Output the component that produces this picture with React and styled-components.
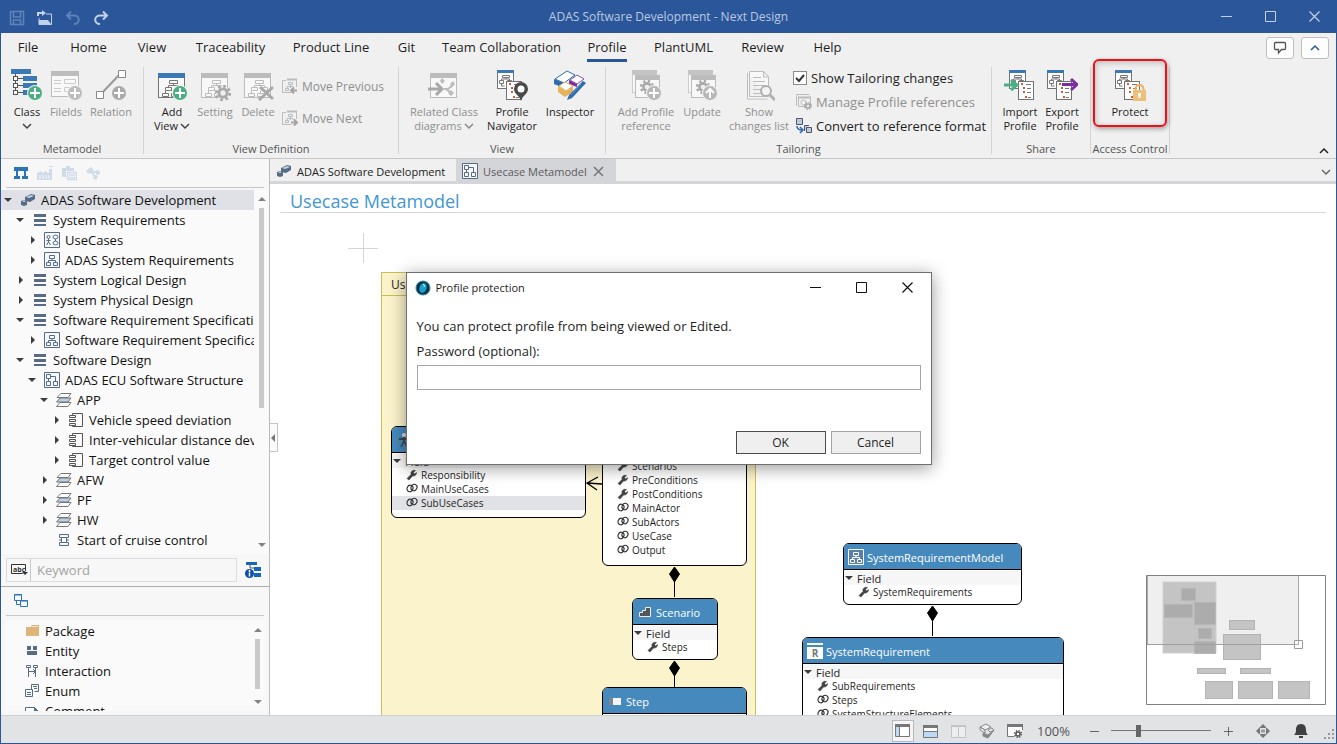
import styled, { createGlobalStyle } from "styled-components";

const colors = {
    title: "#2b579a",
    ribbon: "#f0f0f0",
    line: "#c6c6c9",
    text: "#1e1e1e",
    muted: "#8f8f8f",
    icon: "#737373",
    iconOff: "#bcbcbc",
    blue: "#3b78b6",
    slate: "#566b85",
    node: "#468abd",
    green: "#4bae84",
    purple: "#7c2fa3",
    red: "#d9573d",
    amber: "#e8b25c",
};

const GlobalStyle = createGlobalStyle`
    * { box-sizing: border-box; }
    body { margin: 0; background: #fff; }
    body, button, input {
        font-family: "Open Sans", "Noto Sans", sans-serif;
        font-size: 13px;
        color: ${colors.text};
    }
    button { background: none; border: none; padding: 0; }
    svg { display: block; flex: none; }
`;

const Window = styled.div`
    position: relative;
    display: flex;
    flex-direction: column;
    height: 100vh;
    border: solid ${colors.title};
    border-width: 0 1px 1px 1px;
    overflow: hidden;
`;

const TitleBar = styled.header`
    display: grid;
    grid-template-columns: 1fr auto 1fr;
    align-items: center;
    height: 33px;
    flex: none;
    background: ${colors.title};
    color: #b9c9e2;
    font-size: 12px;
`;

const QuickAccess = styled.div`
    display: flex;
    gap: 12px;
    padding: 2px 0 0 8px;
`;

const WindowButtons = styled.div`
    display: flex;
    justify-content: flex-end;

    button {
        display: flex;
        justify-content: center;
        width: 44px;
    }
`;

const MenuBar = styled.nav`
    display: flex;
    height: 34px;
    flex: none;
    background: ${colors.ribbon};
`;

const MenuTab = styled.button`
    display: flex;
    justify-content: center;
    width: ${(p) => p.$w}px;
    flex: none;
    height: 29px;
    white-space: nowrap;

    span {
        line-height: 28px;
        padding-bottom: 1px;
        height: 29px;
        border-bottom: ${(p) => (p.$active ? `3px solid ${colors.title}` : "none")};
    }
`;

const MenuTools = styled.div`
    display: flex;
    align-items: flex-start;
    gap: 7px;
    margin-left: auto;
    padding: 4px 7px 0 0;

    button {
        display: flex;
        align-items: center;
        justify-content: center;
        width: 28px;
        height: 22px;
        background: #fdfdfd;
        border: 1px solid #bdbdc2;
        border-radius: 3px;
    }
`;

const Ribbon = styled.div`
    display: flex;
    height: 92px;
    flex: none;
    background: ${colors.ribbon};
    border-bottom: 1px solid ${colors.line};
`;

const Group = styled.section`
    display: flex;
    flex-direction: column;
    width: ${(p) => p.$w}px;
    height: 87px;
    flex: none;
    border-right: 1px solid #d4d4d6;
`;

const GroupBody = styled.div`
    display: flex;
    flex: 1;
    padding-left: ${(p) => p.$pad}px;
`;

const GroupLabel = styled.div`
    height: 12px;
    line-height: 14px;
    text-align: center;
    white-space: nowrap;
    font-size: 11px;
    color: #555;
`;

const Tool = styled.button`
    position: relative;
    display: flex;
    flex-direction: column;
    align-items: center;
    gap: 4px;
    width: ${(p) => p.$w}px;
    flex: none;
    padding-top: 2px;
    font-size: 11px;
    line-height: 14px;
    white-space: nowrap;
    color: ${(p) => (p.disabled ? colors.muted : colors.text)};
`;

const ToolText = styled.span`
    display: flex;
    align-items: center;
    justify-content: center;
    gap: 2px;
    height: 14px;
`;

const Callout = styled.span`
    position: absolute;
    inset: -8px -1px 15px -1px;
    border: 2px solid #f00f14;
    border-radius: 6px;
    box-shadow: 1px 2px 5px #0005, inset 1px 2px 6px #0003;
`;

const ToolList = styled.div`
    display: flex;
    flex-direction: column;
    gap: ${(p) => p.$gap}px;
    padding-top: ${(p) => p.$top}px;
`;

const SmallTool = styled.button`
    display: flex;
    align-items: center;
    gap: 4px;
    height: 16px;
    padding-left: ${(p) => p.$indent || 0}px;
    font-size: ${(p) => p.$size || 13}px;
    white-space: nowrap;
    color: ${(p) => (p.disabled ? colors.muted : colors.text)};
`;

const CheckLabel = styled.label`
    display: flex;
    align-items: center;
    gap: 4px;
    height: 16px;
    padding-left: 1px;
    white-space: nowrap;

    input {
        appearance: none;
        width: 14px;
        height: 14px;
        margin: 0;
        border: 1px solid #8a8a8a;
        background: #fff url("data:image/svg+xml,%3Csvg xmlns='http://www.w3.org/2000/svg' viewBox='0 0 12 12'%3E%3Cpath d='M2 6l3 3 5-6' fill='none' stroke='%23333' stroke-width='2'/%3E%3C/svg%3E");
    }
`;

const RibbonEnd = styled.button`
    margin: auto 7px 3px auto;
`;

const Main = styled.main`
    display: flex;
    flex: 1;
    min-height: 0;
`;

const Sidebar = styled.aside`
    display: flex;
    flex-direction: column;
    width: 269px;
    flex: none;
    background: #f7f7f7;
    border-right: 1px solid #b9bbbe;
`;

const PanelBar = styled.div`
    display: flex;
    align-items: center;
    gap: 8px;
    height: 29px;
    flex: none;
    margin: 0 5px;
    padding-left: 7px;
    border-bottom: 1px solid ${colors.line};
`;

const ScrollArea = styled.div`
    display: flex;
    min-height: 0;
    background: #fafafa;
    ${(p) => (p.$grow ? "flex: 1; margin-top: 2px;" : "height: 90px; margin: 5px 4px 4px 5px;")}
`;

const Rows = styled.ul`
    flex: 1;
    min-width: 0;
    margin: 0;
    padding: 0;
    list-style: none;
    overflow: hidden;
`;

const TreeRow = styled.li`
    display: flex;
    align-items: center;
    height: 20px;
    gap: 5px;
    padding-left: ${(p) => p.$level * 12}px;
    white-space: nowrap;
    color: #111;
    background: ${(p) => (p.$selected ? "#e0e1e6" : "transparent")};
`;

const Toggle = styled.span`
    display: flex;
    justify-content: center;
    width: 14px;
    flex: none;
`;

const ToolboxRow = styled.li`
    display: flex;
    align-items: center;
    gap: 4px;
    height: 20px;
    padding-left: 19px;
    color: #111;
`;

const Scrollbar = styled.div`
    display: flex;
    flex-direction: column;
    align-items: center;
    width: 15px;
    padding: 5px 0 5px;
    gap: 5px;

    i {
        width: 5px;
        height: ${(p) => p.$thumb}px;
        background: #c9c9c9;
    }
    svg:last-child { margin-top: auto; }
`;

const SearchRow = styled.div`
    display: flex;
    align-items: center;
    gap: 8px;
    height: 33px;
    flex: none;
    padding: 0 5px;
    border-bottom: 1px solid #adadb0;
`;

const SearchBox = styled.div`
    display: flex;
    align-items: center;
    width: 231px;
    height: 24px;
    padding-left: 4px;
    border: 1px solid #dcdce0;

    input {
        width: 190px;
        height: 22px;
        margin-left: 2px;
        padding: 0 6px;
        border: none;
        border-left: 1px solid #c8ccd2;
        background: none;
        outline: none;
    }
    input::placeholder { color: #a3a3a3; opacity: 1; }
`;

const Editor = styled.section`
    display: flex;
    flex-direction: column;
    flex: 1;
    min-width: 0;
`;

const DocTabs = styled.div`
    display: flex;
    height: 25px;
    flex: none;
    background: ${colors.ribbon};
    border-bottom: 3px solid #d4d5d9;
`;

const DocTab = styled.button`
    display: flex;
    align-items: center;
    gap: 5px;
    width: ${(p) => p.$w}px;
    padding: 2px 0 0 6px;
    font-size: 11px;
    white-space: nowrap;
    color: ${(p) => (p.$active ? "#5b5b5f" : "#222")};
    background: ${(p) => (p.$active ? "#d4d5d9" : "transparent")};

    svg:nth-of-type(2) { margin: 0 12px 0 auto; }
`;

const TabsMenu = styled.button`
    margin: 4px 5px 0 auto;
`;

const Canvas = styled.div`
    position: relative;
    flex: 1;
    overflow: hidden;
    background: #fff;
`;

const PageTitle = styled.h1`
    margin: 0 10px;
    padding-left: 10px;
    height: 29px;
    line-height: 34px;
    border-bottom: 1px solid #d9d9dc;
    font-size: 18px;
    font-weight: 400;
    color: #3f97d3;
`;

const Package = styled.div`
    position: absolute;
    left: 111px;
    top: 88px;
    width: 375px;
    bottom: -20px;

    header {
        width: 110px;
        height: 23px;
        padding: 3px 9px;
        font-size: 12px;
        background: #fbf3cb;
        border: 1px solid #cdbd55;
        border-bottom: none;
    }
    div {
        height: 100%;
        background: #fbf3cb;
        border: 1px solid #cdbd55;
    }
`;

const Links = styled.svg`
    position: absolute;
    left: 0;
    top: 0;
`;

const ClassBox = styled.article`
    position: absolute;
    left: ${(p) => p.$x}px;
    top: ${(p) => p.$y}px;
    width: ${(p) => p.$w}px;
    height: ${(p) => p.$h}px;
    border: 1px solid #000;
    border-radius: 6px;
    background: #fff;
    overflow: hidden;
`;

const ClassHead = styled.header`
    display: flex;
    align-items: center;
    gap: 3px;
    height: 26px;
    margin-bottom: 1px;
    padding: 1px 0 0 4px;
    background: ${colors.node};
    border-bottom: 1px solid #000;
    color: #fff;
    font-size: 11px;
`;

const FieldHead = styled.div`
    display: flex;
    align-items: center;
    gap: 4px;
    height: 14px;
    padding-left: 1px;
    font-size: 11px;
    background: #f6f6f6;
`;

const Field = styled.div`
    display: flex;
    align-items: center;
    gap: 3px;
    height: 14px;
    padding-left: 14px;
    font-size: 10px;
    background: ${(p) => (p.$selected ? "#e1e2e6" : "#fff")};
`;

const Handle = styled.button`
    position: absolute;
    left: 0;
    top: 239px;
    display: flex;
    align-items: center;
    width: 8px;
    height: 29px;
    border: 1px solid #c3c5c8;
    border-left: none;
    background: #fafafa;
`;

const MiniMap = styled.svg`
    position: absolute;
    right: 10px;
    bottom: 10px;
    background: #fff;
`;

const StatusBar = styled.footer`
    display: flex;
    align-items: center;
    justify-content: flex-end;
    height: 28px;
    flex: none;
    padding: 2px 1px 0 0;
    background: #e2e3e5;
    border-top: 1px solid #cfd0d2;
    color: #555;
`;

const StatusButton = styled.button`
    display: flex;
    align-items: center;
    justify-content: center;
    width: 22px;
    height: 22px;
    margin-right: ${(p) => p.$after || 6}px;
    background: ${(p) => (p.$on ? "#f5f5f5" : "none")};
    border: ${(p) => (p.$on ? "1px solid #b9b9bc" : "none")};
`;

const Zoom = styled.label`
    display: flex;
    align-items: center;

    span { width: 48px; }
`;

const ZoomRange = styled.input`
    appearance: none;
    width: 100px;
    height: 14px;
    margin: 0 7px 0 10px;
    background: linear-gradient(#777, #777) center / 100% 1px no-repeat;

    &::-webkit-slider-thumb {
        appearance: none;
        width: 5px;
        height: 12px;
        background: #666;
    }
`;

const DialogLayer = styled.div`
    position: absolute;
    inset: 0;
    display: flex;
    justify-content: center;
    align-items: flex-start;
    padding-top: 272px;
`;

const Dialog = styled.form`
    width: 526px;
    background: #fff;
    border: 1px solid #6f6f6f;
    box-shadow: 0 3px 16px #0006;
    padding-bottom: 10px;
`;

const DialogTitle = styled.header`
    display: flex;
    align-items: center;
    height: 29px;
    padding-left: 8px;
    font-size: 11px;

    span { margin: 0 auto 0 5px; }
    button {
        display: flex;
        justify-content: center;
        width: 46px;
    }
`;

const DialogBody = styled.div`
    display: flex;
    flex-direction: column;
    padding: 14px 10px 0;

    p, label {
        margin: 0;
        height: 20px;
        line-height: 20px;
    }
    label { margin: 5px 0 4px; }
    input {
        height: 25px;
        border: 1px solid #a6a6a8;
        padding: 0 4px;
    }
`;

const DialogActions = styled.div`
    display: flex;
    justify-content: flex-end;
    gap: 5px;
    padding: 41px 10px 0;
`;

const DialogButton = styled.button`
    width: 90px;
    height: 23px;
    background: #efefef;
    border: 1px solid ${(p) => (p.$primary ? "#4c4c4c" : "#a3a3a3")};
    font-size: 12px;
`;

/* ---------- icons ---------- */

const Icon = ({ w = 16, h = w, children }) => (
    <svg width={w} height={h} viewBox={`0 0 ${w} ${h}`} fill="none" aria-hidden="true">{children}</svg>
);

const Chevron = ({ up, c = "#444" }) => (
    <Icon w={10} h={8}><path d={up ? "M1 6l4-4 4 4" : "M1 2l4 4 4-4"} stroke={c} strokeWidth="1.5" /></Icon>
);

const Triangle = ({ dir = "down", c = "#3c3c3c" }) => {
    const d = { down: "M0 2h8l-4 4z", up: "M0 6h8L4 2z", right: "M3 0l4 4-4 4z", left: "M5 0L1 4l4 4z" };
    return <Icon w={8}><path d={d[dir]} fill={c} /></Icon>;
};

const Badge = ({ c, x = 24, y = 24, arrow }) => (
    <g>
        <circle cx={x} cy={y} r="8" fill={colors.ribbon} />
        <circle cx={x} cy={y} r="7" fill={c} />
        <path d={arrow ? `M${x} ${y + 5}v-9M${x - 4} ${y}l4-4 4 4` : `M${x - 5} ${y}h10M${x} ${y - 5}v10`} stroke="#fff" strokeWidth="2" />
    </g>
);

const Chart = ({ c, x = 0, y = 0 }) => (
    <path
        transform={`translate(${x} ${y})`}
        d="M7.500.5h8v3h-8zM3.500 7.500h6v3h-6zM13.500 7.500h6v3h-6zM.5 13.500h6v3h-6zM9.500 13.500h6v3h-6zM11.500 4v2M6.500 7V5.500h10V7M3.500 13v-2M12.500 13v-2"
        stroke={c}
    />
);

const Frame = ({ c, bar, x = 2, y = 4, w = 27, h = 25 }) => (
    <g shapeRendering="crispEdges">
        <rect x={x + 0.5} y={y + 0.5} width={w - 1} height={h - 1} fill="#f8f8f8" stroke={c} />
        <rect x={x} y={y} width={w} height="5" fill={bar} />
    </g>
);

const Gear = ({ x, y, r = 6, c, hole = colors.ribbon }) => (
    <g>
        <circle cx={x} cy={y} r={r * 0.7} fill={c} />
        <circle cx={x} cy={y} r={r * 0.85} stroke={c} strokeWidth={r * 0.35} strokeDasharray={`${r * 0.34} ${r * 0.3276}`} />
        <circle cx={x} cy={y} r={r * 0.33} fill={hole} />
    </g>
);

const ClassIcon = () => (
    <Icon w={32}>
        <g shapeRendering="crispEdges">
            <path d="M0 0h20v5H0zM12 7h14v5H12zM12 14h14v5H12zM12 21h8v5h-8z" fill={colors.blue} />
            <path d="M4.500 5v19M4 9.500h8M4 16.500h8M4 23.500h8" stroke="#555" />
            <path d="M2.500 7.500h4v4h-4zM2.500 14.500h4v4h-4zM2.500 21.500h4v4h-4z" fill="#fff" stroke="#555" />
        </g>
        <Badge c={colors.green} />
    </Icon>
);

const FieldsIcon = () => (
    <Icon w={32}>
        <Frame c={colors.iconOff} bar={colors.iconOff} x={1} y={2} w={28} h={26} />
        <path d="M4 11.500h7M4 14.500h7M4 19.500h7M4 22.500h7M14.500 10.500h11v4h-11zM14.500 18.500h11v4h-11z" stroke="#ccc" />
        <Badge c="#bdbdbd" x={25} />
    </Icon>
);

const RelationIcon = () => (
    <Icon w={32}>
        <path d="M6 25L25 5" stroke="#999" strokeWidth="2" />
        <path d="M1.500 22.500h7v7h-7zM23.500 1.500h7v7h-7z" fill="#fff" stroke="#888" />
        <Badge c="#aaa" />
    </Icon>
);

const ViewIcon = ({ kind }) => {
    const on = kind === "add";
    const c = on ? colors.icon : colors.iconOff;
    return (
        <Icon w={32}>
            <Frame c={c} bar={on ? colors.blue : colors.iconOff} />
            <Chart c={on ? "#777" : c} x={6} y={11} />
            {on && <Badge c={colors.green} />}
            {kind === "setting" && <><circle cx="24" cy="24" r="7" fill={colors.ribbon} /><Gear x={24} y={24} r={8} c="#a9a9a9" /></>}
            {kind === "delete" && <path d="M18 18l13 12M31 18L17 31" stroke="#a9a9a9" strokeWidth="3" />}
        </Icon>
    );
};

const MoveIcon = ({ next }) => (
    <Icon>
        <path d="M5 1.500h10" stroke={colors.iconOff} strokeWidth="2" />
        <path d="M4 2.500H.5v12h9M14.500 2v7M6.500 4.500h4v2h-4zM3.500 10.500h3v2h-3zM8.500 7v3M5 10V8.500h6V10" stroke={colors.iconOff} />
        <path d={next ? "M9 12.500h5M12 9.500l3 3-3 3" : "M15 12.500h-5M12 9.500l-3 3 3 3"} stroke="#a5a5a5" strokeWidth="2" />
    </Icon>
);

const RelatedIcon = () => (
    <Icon w={32}>
        <Frame c={colors.iconOff} bar={colors.iconOff} />
        <path d="M0 20h13M8 14l6 6-6 6" stroke="#a9a9a9" strokeWidth="3" />
        <path d="M12 12l2-3 3 3-3 3zM22 15l3-3 2 3-3 3zM20 24l3-3 3 3-3 3z" fill={colors.iconOff} />
        <path d="M16 20h4l5-4M18 20l5 4" stroke={colors.iconOff} strokeWidth="2" />
    </Icon>
);

const ProfilePages = ({ x = 1 }) => (
    <g transform={`translate(${x} 1)`}>
        <g shapeRendering="crispEdges">
            <path d="M.5.5h16v18H.5z" fill="#fff" stroke={colors.icon} />
            <path d="M0 0h17v3H0z" fill={colors.blue} />
        </g>
        <path d="M5.500 5.500h7v2h-7zM2.500 10.500h4v3h-4zM10.500 10.500h4v3h-4zM9 8v1M4.500 10V9h8v1M4.500 14v2h3" stroke="#777" />
        <g shapeRendering="crispEdges">
            <path d="M9.500 11.500h15v18h-15z" fill="#fff" stroke={colors.icon} />
            <path d="M12 13h2v2h-2zM14 17h2v2h-2zM14 21h2v2h-2zM16 26h2v2h-2z" fill={colors.red} />
            <path d="M17 14.500h5M18 18.500h4M18 22.500h4M19 27.500h3" stroke="#777" />
        </g>
    </g>
);

const NavigatorIcon = () => (
    <Icon w={32}>
        <ProfilePages />
        <path d="M25 32c-1-5-7-7-7-12a7 7 0 0 1 14 0c0 5-6 7-7 12z" fill="#4a4a4a" />
        <circle cx="25" cy="20" r="3.500" fill="#fff" />
    </Icon>
);

const TransferIcon = ({ out }) => (
    <Icon w={32}>
        <ProfilePages x={out ? 1 : 5} />
        {out ? (
            <path d="M16 15.500h14M25 10l6 5.500-6 5.500" stroke={colors.purple} strokeWidth="3" />
        ) : (
            <path d="M0 16h12M7 11l6 5-6 5" stroke={colors.green} strokeWidth="3" />
        )}
    </Icon>
);

const ProtectIcon = () => (
    <Icon w={32}>
        <ProfilePages />
        <path d="M21.500 22v-2a4 4 0 0 1 8 0v2" stroke={colors.amber} strokeWidth="2" />
        <path d="M19 21h13v11H19z" fill="#ecc07a" />
        <path d="M25.500 24v5M24 25.500h3" stroke="#fff" strokeWidth="2" />
    </Icon>
);

const InspectorIcon = () => (
    <Icon w={32}>
        <path d="M1 10L13 2l8 4-11 8z" fill="#fff" stroke="#2b6cb0" />
        <path d="M0 10l10 4v5L0 15z" fill="#2b6cb0" />
        <path d="M16 11l7-5 7 4-7 5z" fill="#fff" stroke="#8a4fb0" />
        <path d="M15 11l8 4v3l-8-3z" fill="#7c2fa3" />
        <path d="M5 17l6-4 8 4-7 5z" fill="#fff" stroke={colors.amber} />
        <path d="M4 17l8 5 7-5v6l-8 5-7-5z" fill={colors.amber} />
        <path d="M29 12l3 2-14 15-5 2 2-5z" fill="#2b6cb0" />
        <path d="M27 15L17 26" stroke="#5f97cf" />
    </Icon>
);

const ReferenceIcon = ({ arrow }) => (
    <Icon w={32}>
        <Frame c="#ccc" bar="#c4c4c4" x={2} y={1} w={25} h={23} />
        <Frame c={colors.iconOff} bar={colors.iconOff} x={5} y={6} w={25} h={23} />
        <Gear x={17} y={18} r={7} c="#aaa" />
        <Badge c="#b8b8b8" arrow={arrow} />
    </Icon>
);

const ChangesIcon = () => (
    <Icon w={32}>
        <path d="M4.500 4v26h20M6.500 2.500h14l5 5v20h-19zM20.500 3v5h5" fill="#f7f7f7" stroke={colors.iconOff} />
        <path d="M10 8.500h8M10 12.500h12M10 16.500h12M10 20.500h8M10 24.500h8" stroke={colors.iconOff} />
        <circle cx="23" cy="22" r="5" fill="#f4f4f4" stroke="#b0b0b0" strokeWidth="2" />
        <path d="M27 26l5 5" stroke="#b0b0b0" strokeWidth="3" />
    </Icon>
);

const ManageIcon = () => (
    <Icon>
        <path d="M.5 12V.5h13M2.500 3.500h12v9h-12z" stroke={colors.iconOff} />
        <path d="M2 3.500h13" stroke={colors.iconOff} strokeWidth="2" />
        <circle cx="7.500" cy="8.500" r="2.500" stroke={colors.iconOff} />
        <Gear x={12} y={12} r={4} c="#a6a6a6" />
    </Icon>
);

const ConvertIcon = () => (
    <Icon>
        <path d="M.5.5h6v6h-6z" fill="#b9cde2" stroke="#556" />
        <path d="M13 7.500H8.500V13M10.500 9.500h5v5h-5z" fill="#b9cde2" stroke="#556" />
        <path d="M1 8c0 3 2 4 5 4M4 9l3 3-3 3" stroke="#2b6cb0" strokeWidth="1.500" />
    </Icon>
);

const CubeIcon = ({ w = 16 }) => (
    <Icon w={w} h={16}>
        <path d="M5 5l6-3 4 1v4l-5 3-5-1z" fill={colors.slate} />
        <path d="M6 5l5-2 3 1-5 2z" fill="#c5d2e2" />
        <path d="M1 9l3-1 3 1v4l-3 1-3-1z" fill={colors.slate} />
        <path d="M2 9l2-.6 2 .6-2 1z" fill="#dfe6ee" />
    </Icon>
);

const Hierarchy = ({ frame = colors.slate, fill = "#f6f8fb", c = colors.slate }) => (
    <Icon>
        <path d="M.5.5h15v15H.5z" fill={fill} stroke={frame} />
        <path d="M5.500 3.500h5v3h-5zM2.500 10.500h4v3h-4zM9.500 10.500h4v3h-4zM8 7v1.500M4.500 10V8.500h7V10" stroke={c} />
    </Icon>
);

const treeIcons = {
    project: <CubeIcon />,
    list: <Icon><path d="M2 2h12v3H2zM2 7h12v3H2zM2 12h12v2H2z" fill={colors.slate} /></Icon>,
    usecase: (
        <Icon>
            <path d="M.5.5h15v15H.5z" fill="#f6f8fb" stroke={colors.slate} />
            <path d="M4.500 7v3M2.500 8.500h4M4.500 10l-2 3M4.500 10l2 3M9 5a2 1.500 0 1 0 5 0 2 1.500 0 1 0-5 0M9 11a2 1.500 0 1 0 5 0 2 1.500 0 1 0-5 0M11.500 7v2" stroke={colors.slate} />
            <circle cx="4.500" cy="5" r="1.500" stroke={colors.slate} />
        </Icon>
    ),
    hierarchy: <Hierarchy />,
    structure: (
        <Icon>
            <path d="M.5.5h15v15H.5z" fill="#f6f8fb" stroke={colors.slate} />
            <path d="M2.500 2.500h4v4h-4zM2.500 9.500h4v4h-4zM9.500 9.500h4v4h-4zM7 4.500h4.500V9M4.500 7v2" stroke={colors.slate} />
        </Icon>
    ),
    layer: (
        <Icon>
            <path d="M4 10.500h11l-3 4H.5z" fill="#fff" stroke="#777" />
            <path d="M4 6h11l-3 4H.5z" fill="#b9d0e6" stroke="#777" />
            <path d="M5 1.500h10l-3 4H1z" fill="#fff" stroke="#777" />
        </Icon>
    ),
    component: (
        <Icon>
            <path d="M4.500 3V1.500h10v13h-10V13M1.500 3.500h6v2h-6zM1.500 7.500h6v2h-6zM1.500 11.500h6v2h-6z" stroke="#555" />
        </Icon>
    ),
    sequence: (
        <Icon>
            <path d="M3.500 2.500h9v3h-9zM3.500 10.500h9v3h-9zM5.500 6v4M10.500 6v4M3 8h3M10 8h3" stroke={colors.slate} />
        </Icon>
    ),
};

const toolboxIcons = {
    package: <Icon><path d="M1 4h5l1-2h7v11H1z" fill="#ddb57a" /><path d="M7 3.500h6" stroke="#f3e0c2" /></Icon>,
    entity: <Icon><path d="M2 3h4v4H2zM8 3h4v4H8zM2 8h10v4H2z" fill={colors.slate} /></Icon>,
    interaction: <Icon><path d="M1.500 2.500h4v2h-4zM8.500 2.500h4v2h-4zM3.500 5v9M10.500 5v9M4 8.500h6M8 6l2.500 2.500L8 11" stroke={colors.slate} /></Icon>,
    enum: <Icon><path d="M6.500 6V1.500h7v7h-4M.5 6.500h7v7h-7zM2 9.500h4M2 11.500h4M8 3.500h4M9 5.500h3" stroke={colors.slate} /></Icon>,
    comment: <Icon><path d="M.5 15V4.500h9l4 4V15" fill="#fff" stroke={colors.slate} /><path d="M9 4l5 5H9z" fill={colors.slate} /></Icon>,
};

const Wrench = () => (
    <Icon w={12}>
        <path d="M1 9.500l4-4a3.300 3.300 0 0 1 4.500-4L7.500 3.500l1 1.500 2-1.500a3.300 3.300 0 0 1-4 3.500L3 11z" fill="#444" stroke="#444" strokeWidth=".6" />
    </Icon>
);

const Rings = () => (
    <Icon w={12}>
        <ellipse cx="4" cy="5.500" rx="2.900" ry="3.300" transform="rotate(25 4 5.500)" stroke="#333" strokeWidth="1.200" />
        <ellipse cx="8" cy="4.500" rx="2.900" ry="3.300" transform="rotate(25 8 4.500)" stroke="#333" strokeWidth="1.200" />
    </Icon>
);

const headIcons = {
    actor: <Icon><circle cx="8" cy="3" r="2" fill="#ddd" /><path d="M3 7h10M8 5v5" stroke="#444" strokeWidth="2" /><path d="M8 9l-3 6M8 9l3 6" stroke="#444" strokeWidth="1.500" /></Icon>,
    model: <Hierarchy frame="#fff" fill="#5b7fa3" c="#fff" />,
    scenario: <Icon><path d="M2.500 12.500v-4h3v-2h3v-3h5v9z" fill="#555" stroke="#eee" /></Icon>,
    requirement: (
        <Icon>
            <path d="M0 0h16v16H0z" fill="#fff" />
            <path d="M0 3h16" stroke="#3f8fb5" strokeWidth="2" />
            <text x="8" y="14" textAnchor="middle" fontSize="10" fontWeight="700" fill="#777">R</text>
        </Icon>
    ),
    step: <Icon><path d="M2 5h12v7H2z" fill="#f5f5f5" /><path d="M2 5h4v7H2z" fill="#7b8594" /></Icon>,
};

/* ---------- data ---------- */

const menu = [
    ["File", 54], ["Home", 67], ["View", 60], ["Traceability", 97], ["Product Line", 104], ["Git", 47],
    ["Team Collaboration", 143], ["Profile", 68], ["PlantUML", 85], ["Review", 73], ["Help", 57],
];

const tree = [
    [0, "down", "project", "ADAS Software Development"],
    [1, "down", "list", "System Requirements"],
    [2, "right", "usecase", "UseCases"],
    [2, "right", "hierarchy", "ADAS System Requirements"],
    [1, "right", "list", "System Logical Design"],
    [1, "right", "list", "System Physical Design"],
    [1, "down", "list", "Software Requirement Specification"],
    [2, "right", "hierarchy", "Software Requirement Specification"],
    [1, "down", "list", "Software Design"],
    [2, "down", "structure", "ADAS ECU Software Structure"],
    [3, "down", "layer", "APP"],
    [4, "right", "component", "Vehicle speed deviation"],
    [4, "right", "component", "Inter-vehicular distance deviation"],
    [4, "right", "component", "Target control value"],
    [3, "right", "layer", "AFW"],
    [3, "right", "layer", "PF"],
    [3, "right", "layer", "HW"],
    [3, null, "sequence", "Start of cruise control"],
    [3, null, "sequence", ""],
];

const toolbox = [
    ["package", "Package"], ["entity", "Entity"], ["interaction", "Interaction"], ["enum", "Enum"], ["comment", "Comment"],
];

const classes = [
    { x: 121, y: 242, w: 195, h: 92, icon: "actor", name: "Actor", fields: ["*Responsibility", "MainUseCases", "SubUseCases"], selected: "SubUseCases" },
    {
        x: 332, y: 233, w: 145, h: 149, icon: "actor", name: "UseCase",
        fields: ["*Scenarios", "*PreConditions", "*PostConditions", "MainActor", "SubActors", "UseCase", "Output"],
    },
    { x: 362, y: 414, w: 86, h: 62, icon: "scenario", name: "Scenario", fields: ["*Steps"] },
    { x: 332, y: 503, w: 145, h: 62, icon: "step", name: "Step", fields: [] },
    { x: 573, y: 359, w: 179, h: 62, icon: "model", name: "SystemRequirementModel", fields: ["*SystemRequirements"] },
    { x: 532, y: 453, w: 262, h: 120, icon: "requirement", name: "SystemRequirement", fields: ["*SubRequirements", "Steps", "SystemStructureElements"] },
];

const mapBlocks = [
    [35, 13, 14, 12], [18, 29, 28, 13], [48, 27, 21, 22], [52, 53, 13, 10], [48, 66, 21, 12],
    [83, 45, 25, 9], [77, 59, 37, 25], [51, 93, 28, 5], [94, 93, 30, 5], [59, 106, 27, 17], [92, 106, 34, 17], [132, 106, 31, 17],
];

/* ---------- parts ---------- */

function RibbonTool({ icon, lines, w, disabled, menu: hasMenu, children }) {
    return (
        <Tool $w={w} disabled={disabled}>
            {icon}
            <span>
                {lines.map((line, i) => (
                    <ToolText key={line + i}>
                        {line}
                        {hasMenu && i === lines.length - 1 && <Chevron c={disabled ? "#888" : "#444"} />}
                    </ToolText>
                ))}
            </span>
            {children}
        </Tool>
    );
}

function ClassNode({ data }) {
    return (
        <ClassBox $x={data.x} $y={data.y} $w={data.w} $h={data.h}>
            <ClassHead>{headIcons[data.icon]}{data.name}</ClassHead>
            <FieldHead><Triangle />Field</FieldHead>
            {data.fields.map((f) => {
                const label = f.replace("*", "");
                return <Field key={f} $selected={label === data.selected}>{f[0] === "*" ? <Wrench /> : <Rings />}{label}</Field>;
            })}
        </ClassBox>
    );
}

function WindowControls({ c, size = 11 }) {
    return (
        <>
            <button type="button" aria-label="Minimize"><Icon w={size}><path d={`M0 5.500h${size}`} stroke={c} /></Icon></button>
            <button type="button" aria-label="Maximize"><Icon w={size}><path d="M.5.5h10v10H.5z" stroke={c} /></Icon></button>
            <button type="button" aria-label="Close"><Icon w={size}><path d="M.5.5l10 10M10.500.5l-10 10" stroke={c} strokeWidth="1.200" /></Icon></button>
        </>
    );
}

function RibbonBar() {
    return (
        <Ribbon>
            <Group $w={143}>
                <GroupBody $pad={7}>
                    <RibbonTool w={38} icon={<ClassIcon />} lines={["Class", ""]} menu />
                    <RibbonTool w={40} icon={<FieldsIcon />} lines={["Filelds"]} disabled />
                    <RibbonTool w={50} icon={<RelationIcon />} lines={["Relation"]} disabled />
                </GroupBody>
                <GroupLabel>Metamodel</GroupLabel>
            </Group>
            <Group $w={255}>
                <GroupBody $pad={4}>
                    <RibbonTool w={48} icon={<ViewIcon kind="add" />} lines={["Add", "View"]} menu />
                    <RibbonTool w={38} icon={<ViewIcon kind="setting" />} lines={["Setting"]} disabled />
                    <RibbonTool w={48} icon={<ViewIcon kind="delete" />} lines={["Delete"]} disabled />
                    <ToolList $top={11} $gap={16}>
                        <SmallTool $size={12} disabled><MoveIcon />Move Previous</SmallTool>
                        <SmallTool $size={12} disabled><MoveIcon next />Move Next</SmallTool>
                    </ToolList>
                </GroupBody>
                <GroupLabel>View Definition</GroupLabel>
            </Group>
            <Group $w={207}>
                <GroupBody $pad={9}>
                    <RibbonTool w={72} icon={<RelatedIcon />} lines={["Related Class", "diagrams"]} menu disabled />
                    <RibbonTool w={64} icon={<NavigatorIcon />} lines={["Profile", "Navigator"]} />
                    <RibbonTool w={52} icon={<InspectorIcon />} lines={["Inspector"]} />
                </GroupBody>
                <GroupLabel>View</GroupLabel>
            </Group>
            <Group $w={386}>
                <GroupBody $pad={8}>
                    <RibbonTool w={64} icon={<ReferenceIcon />} lines={["Add Profile", "reference"]} disabled />
                    <RibbonTool w={48} icon={<ReferenceIcon arrow />} lines={["Update"]} disabled />
                    <RibbonTool w={66} icon={<ChangesIcon />} lines={["Show", "changes list"]} disabled />
                    <ToolList $top={3} $gap={8}>
                        <CheckLabel><input type="checkbox" defaultChecked />Show Tailoring changes</CheckLabel>
                        <SmallTool $indent={4} disabled><ManageIcon />Manage Profile references</SmallTool>
                        <SmallTool $indent={4}><ConvertIcon />Convert to reference format</SmallTool>
                    </ToolList>
                </GroupBody>
                <GroupLabel>Tailoring</GroupLabel>
            </Group>
            <Group $w={99}>
                <GroupBody $pad={6}>
                    <RibbonTool w={44} icon={<TransferIcon />} lines={["Import", "Profile"]} />
                    <RibbonTool w={40} icon={<TransferIcon out />} lines={["Export", "Profile"]} />
                </GroupBody>
                <GroupLabel>Share</GroupLabel>
            </Group>
            <Group $w={79}>
                <GroupBody $pad={3}>
                    <RibbonTool w={72} icon={<ProtectIcon />} lines={["Protect"]}><Callout /></RibbonTool>
                </GroupBody>
                <GroupLabel>Access Control</GroupLabel>
            </Group>
            <RibbonEnd aria-label="Collapse ribbon"><Chevron up c="#222" /></RibbonEnd>
        </Ribbon>
    );
}

function SidePanel() {
    return (
        <Sidebar>
            <PanelBar>
                <Icon>
                    <path d="M1 2h14v4H1zM1 11h6v3H1zM9 11h6v3H9z" fill="#2b74b8" /><path d="M4 6v5M12 6v5" stroke="#2b74b8" strokeWidth="2" />
                </Icon>
                <Icon><path d="M0 15V8l5-2v2l5-2v2h2V4h3v11zM12 1h4v1h-4z" fill="#cfdbe6" /><path d="M2 11h11M2 13h11" stroke="#f7f7f7" strokeDasharray="2 1" /></Icon>
                <Icon><path d="M1 3h4V1h4v2h4v3H5v6H1z" fill="#cfdbe6" /><path d="M6.500 7.500h9v7h-9zM8 10h6M8 12.500h6" stroke="#cfdbe6" strokeWidth="1.500" /></Icon>
                <Icon><path d="M1 6l5-4 3 3-5 4zM11 5l4 1v3l-4 1zM9 10l4 1-2 4-3-2z" fill="#cfdbe6" /><path d="M6 7l4 4M7 7h5" stroke="#cfdbe6" strokeWidth="2" /></Icon>
            </PanelBar>
            <ScrollArea $grow>
                <Rows>
                    {tree.map(([level, dir, icon, label], i) => (
                        <TreeRow key={i} $level={level} $selected={i === 0}>
                            <Toggle>{dir && <Triangle dir={dir} />}</Toggle>
                            {treeIcons[icon]}
                            {label}
                        </TreeRow>
                    ))}
                </Rows>
                <Scrollbar $thumb={200}><Triangle dir="up" c="#858585" /><i /><Triangle c="#858585" /></Scrollbar>
            </ScrollArea>
            <SearchRow>
                <SearchBox>
                    <Icon w={17} h={14}>
                        <path d="M14.500 8V1.500H.5v9h11" stroke="#333" />
                        <text x="2" y="9" fontSize="7" fontWeight="700" fill="#333">abc</text>
                        <path d="M11 9h6l-3 3z" fill="#333" />
                    </Icon>
                    <input aria-label="Keyword" placeholder="Keyword" />
                </SearchBox>
                <Icon>
                    <path d="M1 0h11v3H1zM9 5h7v4H9zM9 11h7v4H9z" fill="#1565c0" /><path d="M5 3v3M5 6h4" stroke="#555" />
                    <circle cx="4.500" cy="11.500" r="4.500" fill="#0d4fa8" /><path d="M4.500 8v2M4.500 10.500v4" stroke="#fff" strokeWidth="1.500" />
                </Icon>
            </SearchRow>
            <PanelBar>
                <Icon><path d="M1.500 1.500h7v6h-7zM1 2h8M7.500 7.500h7v6h-7zM7 8h8M3.500 8v3.500h4" stroke="#2b74b8" /></Icon>
            </PanelBar>
            <ScrollArea>
                <Rows>
                    {toolbox.map(([icon, label]) => (
                        <ToolboxRow key={label}>{toolboxIcons[icon]}{label}</ToolboxRow>
                    ))}
                </Rows>
                <Scrollbar $thumb={50}><Triangle dir="up" c="#858585" /><i /><Triangle c="#858585" /></Scrollbar>
            </ScrollArea>
        </Sidebar>
    );
}

function Diagram() {
    return (
        <Canvas>
            <PageTitle>Usecase Metamodel</PageTitle>
            <Package><header>Usecase</header><div /></Package>
            <Links width="900" height="560" fill="none" stroke="#000">
                <path d="M78 64.500h30M93.500 49v30" stroke="#d5d5d5" />
                <path d="M404.500 395v18M404.500 490v13M662.500 434v18" />
                <path d="M317 299l15 1M328 293l-11 6 10 7" strokeWidth="1.300" />
                <path d="M404.500 383l5 7-5 8-5-8zM404.500 477l5 7-5 8-5-8zM662.500 422l5 7-5 8-5-8z" fill="#000" />
            </Links>
            {classes.map((c) => <ClassNode key={c.name} data={c} />)}
            <Handle aria-label="Collapse panel"><Triangle dir="left" c="#777" /></Handle>
            <MiniMap width="180" height="130" viewBox="0 0 180 130" fill="none">
                <path d="M1.500.5h151v69H1.500z" fill="#efefef" stroke="#aaa" />
                <path d="M17 7h53v71H17z" fill="#c4c4c4" stroke="#d0d0d0" />
                {mapBlocks.map(([x, y, w, h], i) => (
                    <rect key={i} x={x + 0.5} y={y + 0.5} width={w} height={h} fill={i < 5 ? "#acacac" : "#c4c4c4"} stroke={i < 5 ? "#b6b6b6" : "#b3b3b3"} />
                ))}
                <path d="M1 69.500h151.500" stroke="#a0a0a0" />
                <path d="M148.500 65.500h8v8h-8z" stroke="#999" fill="#fff" />
                <path d="M149 69.500h3.500V66" stroke="#aaa" />
                <path d="M.5.5h179v129H.5z" stroke="#808080" />
            </MiniMap>
        </Canvas>
    );
}

function Status() {
    return (
        <StatusBar>
            <StatusButton $on aria-label="Left pane"><Icon><path d="M.5 1.500h14v12H.5z" fill="#fff" stroke="#777" /><path d="M0 2.500h15" stroke="#777" strokeWidth="3" /><path d="M1 4h3v9H1z" fill="#bcd9f5" /><path d="M4.500 4v9" stroke="#777" /></Icon></StatusButton>
            <StatusButton aria-label="Bottom pane"><Icon><path d="M.5 2.500h14v12H.5z" fill="#fff" stroke="#777" /><path d="M0 3.500h15" stroke="#777" strokeWidth="3" /><path d="M1 9h13v5H1z" fill="#bcd9f5" /><path d="M1 8.500h13" stroke="#777" /></Icon></StatusButton>
            <StatusButton aria-label="Split" disabled><Icon><path d="M.5 2.500h14v12H.5zM7.500 3v12" fill="#eee" stroke="#c4c4c4" /><path d="M0 3h15" stroke="#c4c4c4" strokeWidth="2" /></Icon></StatusButton>
            <StatusButton aria-label="Inspector">
                <Icon><path d="M1 4l6-3 5 3-6 3zM1 4v3l5 3V7zM9 7l4-2 2 2-4 2z" fill="#eee" stroke="#888" /><path d="M4 10l5 2 6-5-6 8-5-2z" fill="#888" stroke="#888" /></Icon>
            </StatusButton>
            <StatusButton aria-label="View options" $after={11}><Icon><path d="M7 13.500H.5v-12h15V7" fill="#fff" stroke="#777" /><path d="M0 2.500h16" stroke="#777" strokeWidth="3" /><Gear x={11} y={11} r={4} c="#555" hole="#fff" /></Icon></StatusButton>
            <Zoom>
                <span>100%</span>
                <StatusIcon d="M5 8.500h9" />
                <ZoomRange type="range" min="0" max="100" defaultValue="26" aria-label="Zoom" />
            </Zoom>
            <StatusButton aria-label="Zoom in" $after={12}><StatusIcon d="M3 8.500h9M7.500 4v9" /></StatusButton>
            <StatusButton aria-label="Fit" $after={16}>
                <Icon>
                    <path d="M8 1l4 4H4zM8 15l4-4H4zM1 8l4-4v8zM15 8l-4-4v8z" fill="#777" /><path d="M6 6.500h4v3H6z" fill="#999" />
                </Icon>
            </StatusButton>
            <StatusButton aria-label="Notifications" $after={11}>
                <Icon><path d="M8 1c4 0 5 3 5 6 0 3 1 4 2 5H1c1-1 2-2 2-5 0-3 1-6 5-6zM6 13h4v2H6z" fill="#3f3f3f" /></Icon>
            </StatusButton>
            <Icon w={12} h={18}><path d="M9 7h2v2H9zM9 11h2v2H9zM5 11h2v2H5zM9 15h2v2H9zM5 15h2v2H5zM1 15h2v2H1z" fill="#999" /></Icon>
        </StatusBar>
    );
}

const StatusIcon = ({ d }) => <Icon><path d={d} stroke="#666" /></Icon>;

export default function App() {
    return (
        <Window>
            <GlobalStyle />
            <TitleBar>
                <QuickAccess>
                    <Icon><path d="M1.500 1.500h13v13h-13zM4.500 2v5h7V2M4.500 14v-4h7v4" stroke="#5f82b8" strokeWidth="1.500" /></Icon>
                    <Icon><path d="M2 8v6.500h12.500V4H9" stroke="#c3d2ea" /><path d="M2 14v-4h9l3 4zM5 0l4 3-4 3z" fill="#c3d2ea" /><path d="M1 6V3h4" stroke="#c3d2ea" strokeWidth="2" /></Icon>
                    <Icon><path d="M2 5.500h7a4.500 4 0 0 1 0 8.500M6 1.500l-4 4 4 4" stroke="#5f82b8" strokeWidth="2" /></Icon>
                    <Icon><path d="M14 5.500H7A4.500 4 0 0 0 7 14M10 1.500l4 4-4 4" stroke="#c3d2ea" strokeWidth="2" /></Icon>
                </QuickAccess>
                <span>ADAS Software Development - Next Design</span>
                <WindowButtons><WindowControls c="#c3d2ea" /></WindowButtons>
            </TitleBar>
            <MenuBar>
                {menu.map(([label, w]) => (
                    <MenuTab key={label} $w={w} $active={label === "Profile"}><span>{label}</span></MenuTab>
                ))}
                <MenuTools>
                    <button aria-label="Comments"><Icon w={14}><path d="M2.500 1.500h9a1 1 0 0 1 1 1v5a1 1 0 0 1-1 1h-3l-3 3.500v-3.500h-3a1 1 0 0 1-1-1v-5a1 1 0 0 1 1-1z" stroke="#555" strokeWidth="1.300" /></Icon></button>
                    <button aria-label="Collapse"><Chevron up c={colors.title} /></button>
                </MenuTools>
            </MenuBar>
            <RibbonBar />
            <Main>
                <SidePanel />
                <Editor>
                    <DocTabs>
                        <DocTab $w={186}><CubeIcon />ADAS Software Development</DocTab>
                        <DocTab $w={160} $active>
                            {treeIcons.structure}
                            Usecase Metamodel
                            <Icon w={11}><path d="M1 1l9 9M10 1l-9 9" stroke="#777" strokeWidth="1.500" /></Icon>
                        </DocTab>
                        <TabsMenu aria-label="Open tabs"><Chevron c="#666" /></TabsMenu>
                    </DocTabs>
                    <Diagram />
                </Editor>
            </Main>
            <Status />
            <DialogLayer>
                <Dialog role="dialog" aria-labelledby="dialog-title">
                    <DialogTitle>
                        <Icon>
                            <circle cx="8" cy="8" r="7" fill="#0b2e45" stroke="#2a8da8" />
                            <ellipse cx="8" cy="8" rx="3.500" ry="5" transform="rotate(20 8 8)" fill="#12a4cf" />
                            <path d="M8 4a2 2 0 0 1 1 3" stroke="#d8f4fb" />
                        </Icon>
                        <span id="dialog-title">Profile protection</span>
                        <WindowControls c="#111" />
                    </DialogTitle>
                    <DialogBody>
                        <p>You can protect profile from being viewed or Edited.</p>
                        <label htmlFor="password">Password (optional):</label>
                        <input id="password" type="password" />
                    </DialogBody>
                    <DialogActions>
                        <DialogButton type="button" $primary>OK</DialogButton>
                        <DialogButton type="button">Cancel</DialogButton>
                    </DialogActions>
                </Dialog>
            </DialogLayer>
        </Window>
    );
}
